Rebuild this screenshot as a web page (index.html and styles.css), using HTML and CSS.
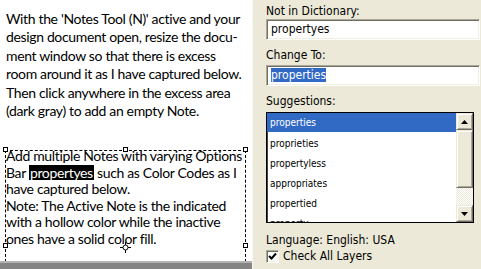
FILE: index.html
```html
<!DOCTYPE html>
<html>
<head>
<meta charset="utf-8">
<link rel="stylesheet" href="styles.css">
</head>
<body>
<div class="screen">
  <div class="doc">
    <div class="page">
      <p class="intro">With the 'Notes Tool (N)' active and your<br>design document open, resize the docu-<br>ment window so that there is excess<br>room around it as I have captured below.<br>Then click anywhere in the excess area<br>(dark gray) to add an empty Note.</p>
      <div class="note">
        <p class="note-text">Add multiple Notes with varying Options<br>Bar <span class="hl">propertyes</span> such as Color Codes as I<br>have captured below.<br>Note: The Active Note is the indicated<br>with a hollow color while the inactive<br>ones have a solid color fill.</p>
        <span class="handle h-tl"></span>
        <span class="handle h-tm"></span>
        <span class="handle h-tr"></span>
        <span class="handle h-ml"></span>
        <span class="handle h-mr"></span>
        <svg class="center-mark" width="11" height="11" viewBox="0 0 11 11"><circle cx="5.5" cy="5.5" r="2.5" fill="none" stroke="#000" stroke-width="1"/><path d="M5.5 0V3M5.5 8V11M0 5.5H3M8 5.5H11" stroke="#000" stroke-width="1"/></svg>
      </div>
    </div>
    <div class="gray-bar"></div>
  </div>
  <div class="panel">
    <div class="lbl lbl-first">Not in Dictionary:</div>
    <div class="field">propertyes</div>
    <div class="lbl lbl-gap">Change To:</div>
    <div class="field field-2"><span class="sel-text">properties</span></div>
    <div class="lbl lbl-gap">Suggestions:</div>
    <div class="listbox">
      <div class="items">
        <div class="item sel">properties</div>
        <div class="item">proprieties</div>
        <div class="item">propertyless</div>
        <div class="item">appropriates</div>
        <div class="item">propertied</div>
        <div class="item">property</div>
      </div>
      <div class="scrollbar">
        <div class="sb-btn"><svg width="7" height="4" viewBox="0 0 7 4"><path d="M3.5 0L7 4H0Z" fill="#000"/></svg></div>
        <div class="sb-thumb"></div>
        <div class="sb-track"></div>
        <div class="sb-btn"><svg width="7" height="4" viewBox="0 0 7 4"><path d="M0 0H7L3.5 4Z" fill="#000"/></svg></div>
      </div>
    </div>
    <div class="lbl lbl-lang">Language: English: USA</div>
    <div class="check-row">
      <span class="checkbox"><svg width="9" height="9" viewBox="0 0 9 9"><path d="M1 4L3.5 6.5L8 1.5" fill="none" stroke="#000" stroke-width="2"/></svg></span>
      <span class="check-label">Check All Layers</span>
    </div>
  </div>
</div>
</body>
</html>
```
FILE: styles.css
```css
html, body {
  margin: 0;
  padding: 0;
  width: 481px;
  height: 269px;
  overflow: hidden;
  background: #ECE9D8;
}

.screen {
  display: flex;
  width: 481px;
  height: 269px;
}

.doc {
  width: 252px;
  display: flex;
  flex-direction: column;
}

.page {
  flex: 1;
  background: #fff;
  overflow: hidden;
  font-family: Lato, "Open Sans", sans-serif;
  font-size: 14px;
  letter-spacing: -0.35px;
  color: #000;
}

.intro {
  margin: 0;
  padding: 10px 0 0 6px;
  line-height: 18.4px;
  white-space: nowrap;
}

.note {
  position: relative;
  margin: 29.6px 0 0 5px;
  width: 239px;
  height: 200px;
  border: 1px dashed #000;
  border-bottom: none;
}

.note-text {
  margin: -3px 0 0 0;
  line-height: 16.6px;
  white-space: nowrap;
}

.hl {
  display: inline-block;
  background: #000;
  color: #fff;
  line-height: 15px;
  padding: 0 1px;
}

.handle {
  position: absolute;
  width: 3px;
  height: 3px;
  border: 1px solid #000;
  background: #fff;
}

.h-tl { left: -3px; top: -4px; }
.h-tm { left: 117px; top: -4px; }
.h-tr { left: 237px; top: -4px; }
.h-ml { left: -3px; top: 92px; }
.h-mr { left: 237px; top: 92px; }

.center-mark {
  position: absolute;
  left: 114px;
  top: 91px;
}

.gray-bar {
  height: 6px;
  border-top: 2px solid #b4b4b4;
  background: #848484;
}

.panel {
  flex: 1;
  border-left: 1px solid #f7f6f0;
  padding-left: 13px;
  font-family: "DejaVu Sans Condensed", "DejaVu Sans", sans-serif;
  font-stretch: condensed;
  font-size: 12px;
  color: #000;
}

.lbl {
  line-height: 15px;
  height: 15px;
  white-space: nowrap;
}

.lbl-first { margin-top: 4px; }
.lbl-gap { margin-top: 8px; }
.lbl-lang { margin-top: 10px; }

.field {
  box-sizing: border-box;
  height: 21px;
  width: 214px;
  background: #fff;
  border-top: 1px solid #aca899;
  border-left: 1px solid #aca899;
  border-bottom: 1px solid #fff;
  border-right: 1px solid #fff;
  box-shadow: inset 1px 1px 0 #716f64, inset -1px -1px 0 #f1efe2;
  padding: 1px 0 0 4px;
  line-height: 17px;
  white-space: nowrap;
}

.field-2 { margin-top: 2px; }

.sel-text {
  background: #316ac5;
  color: #fff;
}

.listbox {
  margin-top: 3px;
  box-sizing: border-box;
  width: 208px;
  height: 111px;
  border: 1px solid #000;
  box-shadow: inset 1px 1px 0 #404040;
  background: #fff;
  display: flex;
  overflow: hidden;
}

.items {
  flex: 1;
  overflow: hidden;
  font-size: 10px;
}

.item {
  height: 20px;
  line-height: 20px;
  padding-left: 3px;
  white-space: nowrap;
}

.item.sel {
  height: 19px;
  line-height: 19px;
  margin-bottom: 2px;
  background: #316ac5;
  color: #fff;
}

.scrollbar {
  width: 17px;
  display: flex;
  flex-direction: column;
}

.sb-btn, .sb-thumb {
  box-sizing: border-box;
  background: #ece9d8;
  border-top: 1px solid #ece9d8;
  border-left: 1px solid #ece9d8;
  border-right: 1px solid #716f64;
  border-bottom: 1px solid #716f64;
  box-shadow: inset 1px 1px 0 #fff, inset -1px -1px 0 #aca899;
}

.sb-btn {
  height: 17px;
  display: flex;
  align-items: center;
  justify-content: center;
}

.sb-thumb { height: 58px; }

.sb-track {
  flex: 1;
  background: repeating-conic-gradient(#fff 0 25%, #ece9d8 0 50%) 0 0 / 2px 2px;
}

.check-row {
  margin-top: 2px;
  display: flex;
  align-items: center;
  height: 13px;
  white-space: nowrap;
}

.checkbox {
  box-sizing: border-box;
  width: 13px;
  height: 13px;
  background: #fff;
  border-top: 1px solid #aca899;
  border-left: 1px solid #aca899;
  border-bottom: 1px solid #fff;
  border-right: 1px solid #fff;
  box-shadow: inset 1px 1px 0 #716f64, inset -1px -1px 0 #f1efe2;
  display: flex;
  align-items: center;
  justify-content: center;
}

.check-label {
  margin-left: 4px;
  line-height: 13px;
}
```
